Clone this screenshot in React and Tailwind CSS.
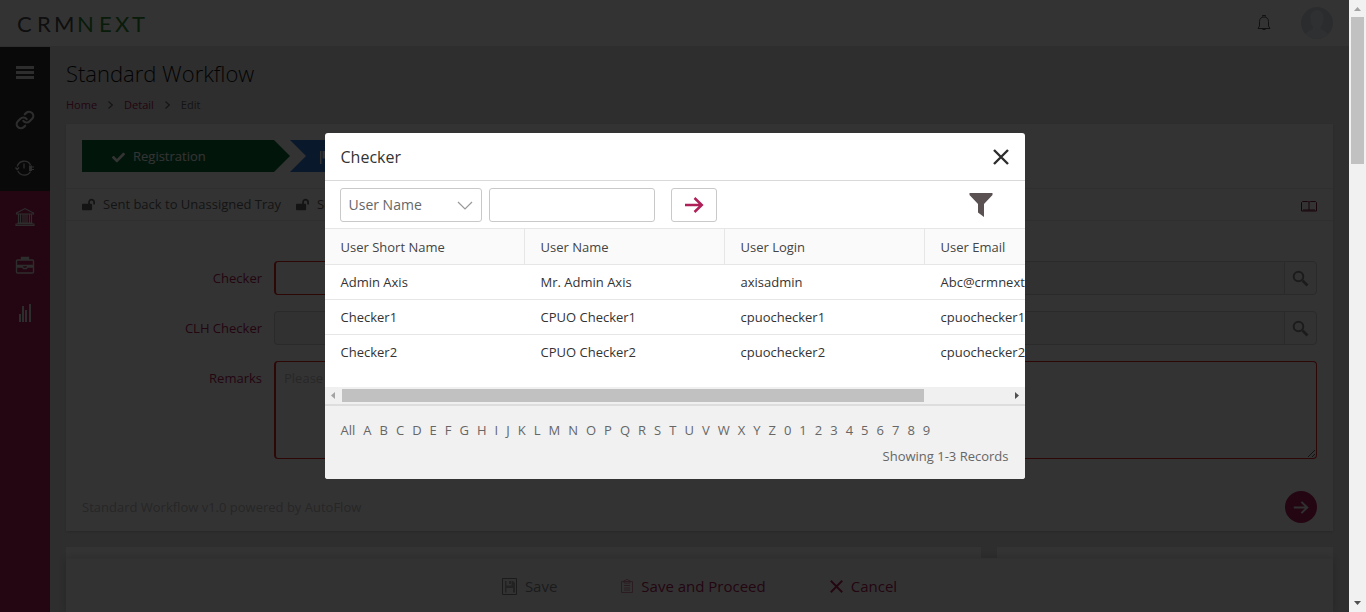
import React from "react";
import { FaCheck, FaLockOpen } from "react-icons/fa";
import { Link as ChainIcon } from "lucide-react";

function Logo() {
  return (
    <a href="#home" aria-label="CRMNEXT" className="block">
      <svg width="136" height="30" viewBox="0 0 136 30" className="overflow-visible font-['Lato',sans-serif] text-[22px]">
        <text x="-1 19 36" y="24" fill="#4a4a4a">CRM</text>
        <text x="59 81 97 114" y="24" fill="#2f8a32">NEXT</text>
      </svg>
    </a>
  );
}

const line = { fill: "none", stroke: "currentColor" };

function MenuIcon() {
  return (
    <svg width="18" height="13" viewBox="0 0 18 13" fill="currentColor">
      <path d="M0 0h18v3H0zM0 5h18v3H0zM0 10h18v3H0z" />
    </svg>
  );
}

function ClockIcon() {
  return (
    <svg width="20" height="18" viewBox="0 0 20 18" {...line} strokeWidth="1.3">
      <path d="M2.200 7.500A7.200 7.200 0 0 1 15.500 6M2.800 12A7.200 7.200 0 0 0 15.500 12.500M9 4.500v5" />
      <path d="M.5 8.500L2.200 10.500 4 8.500" />
      <path d="M14 6.500h3v1h2v1h-2v1.500h2v1h-2v1h-3z" fill="currentColor" stroke="none" />
    </svg>
  );
}

function BankIcon() {
  return (
    <svg width="20" height="20" viewBox="0 0 20 20" {...line} strokeWidth="1.100">
      <path d="M1.500 6L10 1.500 18.500 6v1h-17zM3.500 7v8.500M5.500 7v8.500M8 7v8.500M10 7v8.500M12 7v8.500M14.500 7v8.500M16.500 7v8.500M2.500 16h15M1 18.500h18v-1.500H1z" />
    </svg>
  );
}

function BriefcaseIcon() {
  return (
    <svg width="20" height="18" viewBox="0 0 20 18" {...line} strokeWidth="1.300">
      <rect x="1.500" y="4" width="17" height="13" rx="1" />
      <path d="M6.500 3h7M6.500 4V1.500h7V4M1.500 9.500h17M1.500 11h6l1 1.500h3l1-1.500h6" />
    </svg>
  );
}

function BarsIcon() {
  return (
    <svg width="14" height="20" viewBox="0 0 14 20" fill="currentColor">
      <path d="M1 11h2v8H1zM4 3h2v16H4zM7 7h2v12H7zM11 1h2v18h-2z" />
    </svg>
  );
}

function SearchIcon() {
  return (
    <svg width="17" height="17" viewBox="0 0 17 17" {...line}>
      <circle cx="6.500" cy="6.500" r="4.800" strokeWidth="2" />
      <path d="M10.500 10.500l5 5" strokeWidth="2.800" />
    </svg>
  );
}

function ArrowIcon({ className }) {
  return (
    <svg viewBox="0 0 20 16" className={className} {...line} strokeWidth="2.500">
      <path d="M1 8h17M10.500 1L17.800 8 10.500 15" />
    </svg>
  );
}

function CrossIcon({ className }) {
  return (
    <svg viewBox="0 0 16 16" className={className} {...line} strokeWidth="2.400">
      <path d="M1 1l14 14M15 1L1 15" />
    </svg>
  );
}

function Crumb() {
  return (
    <svg width="5" height="8" viewBox="0 0 5 8" {...line} strokeWidth="1.200">
      <path d="M.5.5L4.300 4 .5 7.500" />
    </svg>
  );
}

const darkItems = [
  ["Menu", <MenuIcon key="i" />],
  ["Links", <ChainIcon key="i" size={20} strokeWidth={2.600} />],
  ["Recent", <ClockIcon key="i" />],
];
const pinkItems = [
  ["Accounts", <BankIcon key="i" />],
  ["Cases", <BriefcaseIcon key="i" />],
  ["Reports", <BarsIcon key="i" />],
];

function SideItems({ items }) {
  return items.map(([name, icon]) => (
    <button key={name} type="button" aria-label={name} className="flex h-12 w-full items-center justify-center pt-0.5">
      {icon}
    </button>
  ));
}

function Sidebar() {
  return (
    <nav className="flex w-[50px] shrink-0 flex-col bg-[#b02058] text-[#e0e0e0]">
      <div className="bg-[#2d2d2d]">
        <SideItems items={darkItems} />
      </div>
      <div className="pt-px">
        <SideItems items={pinkItems} />
      </div>
    </nav>
  );
}

function TopBar() {
  return (
    <header className="flex h-[47px] shrink-0 items-center justify-between border-b border-[#e4e4e4] bg-white pr-4 pl-[18px]">
      <Logo />
      <div className="flex items-center gap-[30px]">
        <button type="button" aria-label="Notifications" className="text-[#555555]">
          <svg width="14" height="16" viewBox="0 0 14 16" {...line} strokeWidth="1">
            <path d="M1 13.500h12L11.500 11V6.500C11.500 3.500 9.500 2 7 2S2.500 3.500 2.500 6.500V11zM5.500 1.500V.5h3v1M5.500 14.500h3" />
          </svg>
        </button>
        <button type="button" aria-label="Profile">
          <svg width="32" height="32" viewBox="0 0 32 32">
            <clipPath id="avatar"><circle cx="16" cy="16" r="16" /></clipPath>
            <g clipPath="url(#avatar)">
              <rect width="32" height="32" fill="#d3dbe4" />
              <path d="M9.500 10c0-9 13-9 13 0 0 5-1 8-3 10v2c4 2 7 3 8 6v4H4v-4c1-3 4-4 8-6v-2c-2-2-2.500-5-2.500-10z" fill="#e9edf2" />
            </g>
          </svg>
        </button>
      </div>
    </header>
  );
}

function Stages() {
  return (
    <div className="flex h-[65px] items-center border-b border-[#e8e8e8] px-4">
      <div className="flex h-8 w-[208px] shrink-0 items-center bg-[#0b6b3a] pt-0.5 pl-[30px] text-[13px] text-white [clip-path:polygon(0_0,192px_0,100%_50%,192px_100%,0_100%)]">
        <FaCheck size={13} className="mr-2" />
        Registration
      </div>
      <div className="flex h-8 w-[208px] shrink-0 items-center bg-[#2f77d0] pt-0.5 pl-[30px] text-[13px] text-white [clip-path:polygon(0_0,192px_0,100%_50%,192px_100%,0_100%,16px_50%)]">
        <svg width="13" height="13" viewBox="0 0 13 13" fill="currentColor" className="mr-2">
          <path d="M0 0h1.500v13H0zM2.500 0H12v7.500H2.500z" />
        </svg>
        Checker
      </div>
    </div>
  );
}

function LookupField({ id, label, required }) {
  return (
    <div className="flex items-center gap-3">
      <label htmlFor={id} className="w-[180px] shrink-0 pt-0.5 text-right text-[13px] text-[#b02058]">{label}</label>
      <div className="flex h-[34px] flex-1">
        <input
          id={id}
          type="text"
          className={
            required
              ? "w-1/3 rounded-l-sm border border-l-2 border-[#e02020] bg-white px-2 text-[13px]"
              : "w-1/3 rounded-l-sm border border-r-0 border-[#cfcfcf] bg-[#f5f5f5] px-2 text-[13px]"
          }
        />
        <div className="flex-1 border-y border-[#cfcfcf] bg-[#f5f5f5]" />
        <button type="button" aria-label={"Search " + label} className="flex w-[33px] items-center justify-center rounded-r-sm border border-[#cfcfcf] bg-[#f9f9f9] text-[#888888]">
          <SearchIcon />
        </button>
      </div>
    </div>
  );
}

function WorkflowCard() {
  return (
    <section className="bg-white shadow-sm">
      <Stages />
      <div className="flex h-8 items-center border-b border-[#ececec] px-4 text-[13px] text-[#666666]">
        <FaLockOpen size={13} className="mr-2" />
        <span className="mr-[15px]">Sent back to Unassigned Tray</span>
        <FaLockOpen size={13} className="mr-2" />
        <span>Sent back to Maker</span>
        <button type="button" aria-label="Guide" className="mt-1 ml-auto text-[#7a1540]">
          <svg width="16" height="11" viewBox="0 0 16 11" {...line} strokeWidth="1">
            <path d="M1.500.5h5q1.500 0 1.500 1 0-1 1.500-1h5l1 1v8.500H.5V1.500zM8 1.500V9M2 9h12" />
          </svg>
        </button>
      </div>
      <div className="flex flex-col gap-4 px-4 pt-10">
        <LookupField id="checker" label="Checker" required />
        <LookupField id="clh" label="CLH Checker" />
        <div className="flex gap-3">
          <label htmlFor="remarks" className="w-[180px] shrink-0 pt-2 text-right text-[13px] leading-[18px] text-[#b02058]">Remarks</label>
          <textarea
            id="remarks"
            placeholder="Please enter remarks"
            className="h-[98px] flex-1 resize rounded-sm border border-l-2 border-[#e02020] px-2 pt-[7px] text-[13px] leading-[18px] placeholder:text-[#c4c4c4]"
          />
        </div>
      </div>
      <div className="flex items-center justify-between px-4 pt-8 pb-2">
        <p className="pt-0.5 text-[13px] text-[#bdbdbd]">Standard Workflow v1.0 powered by AutoFlow</p>
        <button type="button" aria-label="Next step" className="flex size-8 items-center justify-center rounded-full bg-[#b02058] text-[#f0f0f0]">
          <ArrowIcon className="h-[13px] w-4" />
        </button>
      </div>
    </section>
  );
}

function ActionBar() {
  return (
    <footer className="absolute inset-x-4 bottom-0 flex h-[54px] items-center justify-center gap-16 border-t border-[#f0f0f0] bg-[#fbfbfb] pt-px text-[15px] text-[#b02058] shadow-[0_0_8px_rgba(0,0,0,0.2)]">
      <button type="button" className="flex items-center gap-2 text-[#888888]">
        <svg width="15" height="17" viewBox="0 0 15 17">
          <path d="M.5.5h14v16H.5z" {...line} strokeWidth="1" />
          <path d="M3 3h1.500v4.500h5V3H11l2 2v9.500h-2V10H4.500v4.500H3zM7 3h2v3H7z" fill="currentColor" opacity=".7" />
        </svg>
        Save
      </button>
      <button type="button" className="flex items-center gap-2">
        <svg width="12" height="14" viewBox="0 0 12 14" {...line} strokeWidth="1" opacity=".5">
          <path d="M.5 2.500h11v11H.5zM3 4h6V1.500H7.500a1.500 1 0 0 0-3 0H3zM3 6.500h6M3 9h6M3 11h6" />
        </svg>
        Save and Proceed
      </button>
      <button type="button" className="flex items-center gap-2">
        <CrossIcon className="size-[13px]" />
        Cancel
      </button>
    </footer>
  );
}

const columns = ["User Short Name", "User Name", "User Login", "User Email"];
const rows = [
  ["Admin Axis", "Mr. Admin Axis", "axisadmin", "Abc@crmnext.com"],
  ["Checker1", "CPUO Checker1", "cpuochecker1", "cpuochecker1@crmnext.com"],
  ["Checker2", "CPUO Checker2", "cpuochecker2", "cpuochecker2@crmnext.com"],
];
const letters = ["All", ..."ABCDEFGHIJKLMNOPQRSTUVWXYZ0123456789"];

function CheckerDialog() {
  return (
    <div role="dialog" aria-modal="true" aria-labelledby="dialog-title" className="w-[700px] max-w-full overflow-hidden rounded-[3px] bg-white text-[13px] text-[#333333]">
      <div className="flex h-12 items-center justify-between border-b border-[#d9d9d9] px-4">
        <h2 id="dialog-title" className="text-[16px]">Checker</h2>
        <button type="button" aria-label="Close" className="text-[#2d2d2d]">
          <CrossIcon className="size-4" />
        </button>
      </div>
      <form className="flex h-[47px] items-center px-[15px]" onSubmit={(e) => e.preventDefault()}>
        <div className="relative mr-[7px] text-[14px] text-[#666666]">
          <select aria-label="Search by" className="h-[34px] w-[142px] appearance-none rounded-[3px] border border-[#c9c9c9] bg-white px-2">
            <option>User Name</option>
            <option>User Login</option>
          </select>
          <svg width="16" height="9" viewBox="0 0 16 9" className="pointer-events-none absolute top-[13px] right-[9px] text-[#999999]" {...line} strokeWidth="1.200">
            <path d="M1 1l7 7 7-7" />
          </svg>
        </div>
        <input type="text" aria-label="Search text" className="mr-4 h-[34px] w-[166px] rounded-[3px] border border-[#c9c9c9] px-2" />
        <button type="submit" aria-label="Search" className="flex h-[34px] w-[46px] items-center justify-center rounded-[3px] border border-[#c9c9c9] text-[#b02058]">
          <ArrowIcon className="h-4 w-5" />
        </button>
        <button type="button" aria-label="Filter" className="mr-[17px] ml-auto text-[#5a5252]">
          <svg width="24" height="24" viewBox="0 0 24 24" fill="currentColor">
            <path d="M.5 0h23v2L15 11v13l-6-4.500V11L.5 2z" />
          </svg>
        </button>
      </form>
      <div className="h-[159px] overflow-hidden">
        <table className="w-[1000px] table-fixed border-separate border-spacing-0 text-left">
          <thead>
            <tr className="bg-[#fafafa] text-[#444444]">
              {columns.map((c) => (
                <th key={c} scope="col" className="h-[37px] w-[200px] border-y border-r border-[#e6e6e6] pt-0.5 pl-4 font-normal">{c}</th>
              ))}
              <th scope="col" className="w-[200px] border-y border-[#e6e6e6]" />
            </tr>
          </thead>
          <tbody>
            {rows.map((r, i) => (
              <tr key={r[0]}>
                {r.map((v) => (
                  <td key={v} className={i < 2 ? "h-[35px] border-b border-[#e6e6e6] pt-0.5 pl-4" : "h-[35px] pl-4"}>{v}</td>
                ))}
                <td className={i < 2 ? "border-b border-[#e6e6e6]" : ""} />
              </tr>
            ))}
          </tbody>
        </table>
      </div>
      <div className="flex h-[17px] items-center bg-[#f0f0f0]">
        <svg width="17" height="17" viewBox="0 0 17 17" fill="#a3a3a3"><path d="M10 5v7L6 8.500z" /></svg>
        <div className="flex-1">
          <div className="h-[13px] w-[87.5%] bg-[#c1c1c1]" />
        </div>
        <svg width="17" height="17" viewBox="0 0 17 17" fill="#505050"><path d="M7 5v7l4-3.500z" /></svg>
      </div>
      <div className="border-t-2 border-[#dddddd] bg-[#f1f1f1] px-4 pt-[15px] pb-[14px] leading-[18px] text-[#666666]">
        <div className="flex gap-2">
          {letters.map((l) => (
            <a key={l} href={"#" + l}>{l}</a>
          ))}
        </div>
        <p className="mt-2 text-right">Showing 1-3 Records</p>
      </div>
    </div>
  );
}

function PageScrollbar() {
  return (
    <div className="flex w-[17px] shrink-0 flex-col items-center bg-[#f1f1f1]">
      <svg width="17" height="17" viewBox="0 0 17 17" fill="#a3a3a3"><path d="M5 11h7L8.500 7z" /></svg>
      <div className="w-[13px] flex-1">
        <div className="h-[147px] bg-[#c1c1c1]" />
      </div>
      <svg width="17" height="17" viewBox="0 0 17 17" fill="#505050"><path d="M5 6h7L8.500 10z" /></svg>
    </div>
  );
}

export default function App() {
  return (
    <div className="flex h-screen overflow-hidden font-['Open_Sans',sans-serif]">
      <div className="relative flex min-w-0 flex-1 flex-col">
        <TopBar />
        <div className="flex min-h-0 flex-1">
          <Sidebar />
          <main className="relative min-w-0 flex-1 overflow-hidden bg-[#e4e4e4] px-4">
            <h1 className="pt-[11px] text-[22px] leading-[30px] font-light text-[#111111]">Standard Workflow</h1>
            <nav aria-label="Breadcrumb" className="mt-[9px] mb-[11px] flex items-center gap-[11px] text-[11px] leading-4 text-[#666666]">
              <a href="#home" className="text-[#b02058]">Home</a>
              <Crumb />
              <a href="#detail" className="text-[#b02058]">Detail</a>
              <Crumb />
              <span>Edit</span>
            </nav>
            <WorkflowCard />
            <div className="mt-4 flex gap-4">
              <div className="h-24 flex-1 bg-white" />
              <div className="h-24 w-[336px] bg-white" />
            </div>
            <ActionBar />
          </main>
        </div>
        <div className="absolute inset-0 flex items-center justify-center bg-black/80">
          <CheckerDialog />
        </div>
      </div>
      <PageScrollbar />
    </div>
  );
}
